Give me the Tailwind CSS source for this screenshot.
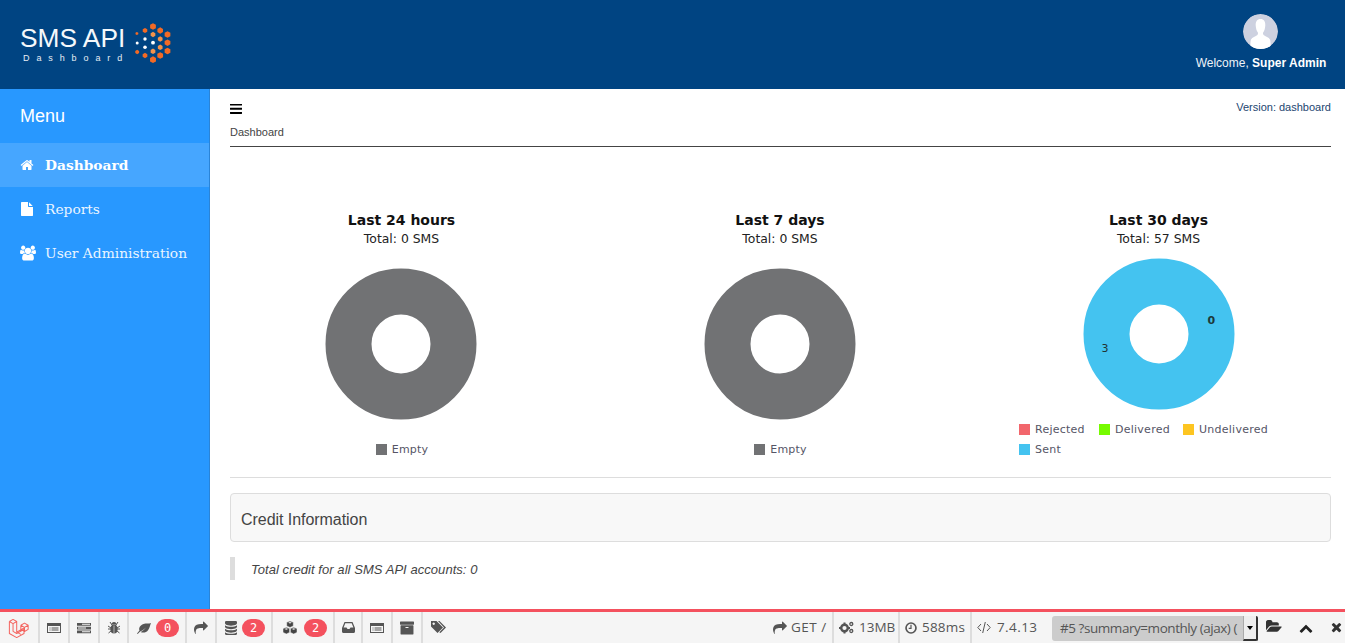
<!DOCTYPE html>
<html lang="en">

<head>
    <meta charset="UTF-8">
    <meta name="viewport" content="width=device-width, initial-scale=1.0">
    <title>SMS API Dashboard</title>
    <script src="https://cdn.jsdelivr.net/npm/@tailwindcss/browser@4"></script>
</head>

<body class="h-screen overflow-hidden flex flex-col bg-white font-['Liberation_Sans',sans-serif]">
    <!-- Header -->
    <header class="h-[89px] shrink-0 bg-[#004482] flex justify-between text-white">
        <div class="flex pl-[20px] pt-[23px]">
            <div>
                <div class="text-[26.300px] leading-[30px] text-[#f4f8fb]">SMS API</div>
                <div class="text-[9px] leading-[10px] mt-[0px] ml-[3px] tracking-[6.900px] text-[#e6edf4]">Dashboard</div>
            </div>
            <svg class="ml-[5px] -mt-[1px]" width="40" height="42" viewBox="136 23 37 42">
                <defs>
                    <polygon id="hex" points="0,-1 0.87,-0.5 0.87,0.5 0,1 -0.87,0.5 -0.87,-0.5" />
                </defs>
                <g fill="#f26a25">
                    <use href="#hex" transform="translate(153.5 27.5) scale(3.3)" />
                    <use href="#hex" transform="translate(145.5 31.5) scale(2.6)" />
                    <use href="#hex" transform="translate(160.7 31.5) scale(3.2)" />
                    <use href="#hex" transform="translate(168 35.5) scale(3.3)" />
                    <use href="#hex" transform="translate(137.4 34.5) scale(1.6)" />
                    <use href="#hex" transform="translate(168 43.7) scale(3.3)" />
                    <use href="#hex" transform="translate(168 52) scale(3.3)" />
                    <use href="#hex" transform="translate(137.7 53) scale(2.2)" />
                    <use href="#hex" transform="translate(145.5 56.5) scale(2.7)" />
                    <use href="#hex" transform="translate(160.7 56.5) scale(3.3)" />
                    <use href="#hex" transform="translate(153.5 60.7) scale(3.4)" />
                </g>
                <g fill="#f4924a">
                    <use href="#hex" transform="translate(153.5 35.5) scale(2.7)" />
                    <use href="#hex" transform="translate(160.7 40) scale(2.7)" />
                    <use href="#hex" transform="translate(160.7 48.3) scale(2.7)" />
                    <use href="#hex" transform="translate(153.5 52.3) scale(2.7)" />
                </g>
                <g fill="#ffffff">
                    <circle cx="145.5" cy="40" r="1.7" />
                    <circle cx="137.7" cy="44" r="1.5" />
                    <circle cx="153.5" cy="43.7" r="1.9" />
                    <circle cx="145.5" cy="48.3" r="1.8" />
                </g>
            </svg>
        </div>
        <div class="w-[150px] mr-[9px] flex flex-col items-center pt-[14px]">
            <svg width="35" height="35" viewBox="0 0 35 35" class="rounded-full -ml-[1px]">
                <circle cx="17.5" cy="17.5" r="17.5" fill="#cdd1e0" />
                <path d="M17.500 5c-3.400 0-5 2.600-4.800 6.500.2 3 .9 5.300 2 6.700.5.700.4 2-.3 2.700-1.700 1.500-5.300 2.300-6.400 4.600-.5 1.200-.7 5-.7 9.500h20.400c0-4.500-.2-8.300-.7-9.500-1.100-2.300-4.700-3.100-6.400-4.600-.7-.7-.8-2-.3-2.700 1.100-1.400 1.800-3.700 2-6.700.2-3.900-1.400-6.500-4.800-6.500z" fill="#ffffff" />
            </svg>
            <div class="mt-[7px] text-[12px] leading-[14px] whitespace-nowrap text-[#eef3f8]">Welcome, <b class="font-bold text-white">Super Admin</b></div>
        </div>
    </header>

    <div class="flex-1 flex min-h-0">
        <!-- Sidebar -->
        <aside class="w-[210px] shrink-0 bg-[#2898ff] border-r border-[#2a84d8] text-white">
            <div class="h-[54px] pl-[20px] pt-[1px] flex items-center text-[18px]">Menu</div>
            <nav class="font-['DejaVu_Serif',serif] text-[13.800px]">
                <a class="h-[44px] pl-[20px] flex items-center bg-[#46a6ff] font-bold">
                    <svg class="w-[14px] h-[14px] mr-[11px] fill-white" viewBox="0 0 1792 1792"><path d="M1472 992v480q0 26-19 45t-45 19h-384v-384h-256v384h-384q-26 0-45-19t-19-45v-480q0-1 .5-3t.5-3l575-474 575 474q1 2 1 6zm223-69l-62 74q-8 9-21 11h-3q-13 0-21-7l-692-577-692 577q-12 8-24 7-13-2-21-11l-62-74q-8-10-7-23.5t11-21.5l719-599q32-26 76-26t76 26l244 204v-195q0-14 9-23t23-9h192q14 0 23 9t9 23v408l219 182q10 8 11 21.5t-7 23.5z" /></svg>
                    Dashboard
                </a>
                <a class="h-[44px] pl-[20px] flex items-center text-[#eaf5ff]">
                    <svg class="w-[14px] h-[14px] mr-[11px] fill-white" viewBox="128 0 1536 1792"><path d="M1596 476q14 14 28 36h-472v-472q22 14 36 28zm-476 164h544v1056q0 40-28 68t-68 28h-1344q-40 0-68-28t-28-68v-1600q0-40 28-68t68-28h800v544q0 40 28 68t68 28z" /></svg>
                    Reports
                </a>
                <a class="h-[44px] pl-[20px] flex items-center text-[#eaf5ff]">
                    <svg class="w-[16px] h-[16px] mr-[9px] fill-white" viewBox="0 0 1920 1792"><path d="M593 896q-162 5-265 128h-134q-82 0-138-40.500t-56-118.500q0-353 124-353 6 0 43.500 21t97.500 42.500 119 21.500q67 0 133-23-5 37-5 66 0 139 81 256zm1071 637q0 120-73 189.500t-194 69.500h-874q-121 0-194-69.500t-73-189.500q0-53 3.500-103.500t14-109 26.500-108.500 43-97.500 62-81 85.500-53.500 111.500-20q10 0 43 21.500t73 48 107 48 135 21.500 135-21.500 107-48 73-48 43-21.500q61 0 111.500 20t85.500 53.500 62 81 43 97.500 26.500 108.500 14 109 3.500 103.500zm-1024-1277q0 106-75 181t-181 75-181-75-75-181 75-181 181-75 181 75 75 181zm704 384q0 159-112.500 271.500t-271.500 112.500-271.500-112.500-112.500-271.500 112.500-271.500 271.500-112.500 271.500 112.500 112.500 271.500zm576 225q0 78-56 118.500t-138 40.500h-134q-103-123-265-128 81-117 81-256 0-29-5-66 66 23 133 23 59 0 119-21.500t97.500-42.500 43.500-21q124 0 124 353zm-128-609q0 106-75 181t-181 75-181-75-75-181 75-181 181-75 181 75 75 181z" /></svg>
                    User Administration
                </a>
            </nav>
        </aside>

        <!-- Main -->
        <main class="flex-1 min-w-0 pl-[20px] pr-[14px]">
            <div class="flex justify-between pt-[11px] h-[58px] border-b border-[#444444]">
                <div>
                    <svg class="w-[12px] h-[10px] mt-[4px] fill-black" viewBox="128 320 1536 1216" preserveAspectRatio="none"><path d="M1664 1344v128q0 26-19 45t-45 19h-1408q-26 0-45-19t-19-45v-128q0-26 19-45t45-19h1408q26 0 45 19t19 45zm0-512v128q0 26-19 45t-45 19h-1408q-26 0-45-19t-19-45v-128q0-26 19-45t45-19h1408q26 0 45 19t19 45zm0-512v128q0 26-19 45t-45 19h-1408q-26 0-45-19t-19-45v-128q0-26 19-45t45-19h1408q26 0 45 19t19 45z" /></svg>
                    <div class="mt-[11px] text-[11px] leading-[14px] text-[#444444]">Dashboard</div>
                </div>
                <div class="text-[11px] leading-[14px] text-[#23456f]">Version: dashboard</div>
            </div>

            <!-- Charts -->
            <div class="-ml-[18px] -mr-[16px] mt-[64px] grid grid-cols-[379px_378px_379px] h-[248px] font-['DejaVu_Sans',sans-serif]">
                <section class="flex flex-col items-center">
                    <h3 class="text-[14px] leading-[18px] font-bold text-[#111111]">Last 24 hours</h3>
                    <p class="text-[12.400px] leading-[20px] text-[#222222]">Total: 0 SMS</p>
                    <div class="flex-1 flex items-center justify-center mr-[1px]">
                        <svg width="152" height="152" viewBox="0 0 152 152"><circle cx="76" cy="76" r="52.500" fill="none" stroke="#717274" stroke-width="46" /></svg>
                    </div>
                    <div class="h-[20px] ml-[1px] flex items-center gap-[5px] text-[11px] text-[#555566] tracking-[0.2px]">
                        <span class="w-[11px] h-[11px] bg-[#717274]"></span><span class="mt-[2px]">Empty</span>
                    </div>
                </section>
                <section class="flex flex-col items-center">
                    <h3 class="text-[14px] leading-[18px] font-bold text-[#111111]">Last 7 days</h3>
                    <p class="text-[12.400px] leading-[20px] text-[#222222]">Total: 0 SMS</p>
                    <div class="flex-1 flex items-center justify-center">
                        <svg width="152" height="152" viewBox="0 0 152 152"><circle cx="76" cy="76" r="52.500" fill="none" stroke="#717274" stroke-width="46" /></svg>
                    </div>
                    <div class="h-[20px] ml-[1px] flex items-center gap-[5px] text-[11px] text-[#555566] tracking-[0.2px]">
                        <span class="w-[11px] h-[11px] bg-[#717274]"></span><span class="mt-[2px]">Empty</span>
                    </div>
                </section>
                <section class="flex flex-col items-center">
                    <h3 class="text-[14px] leading-[18px] font-bold text-[#111111]">Last 30 days</h3>
                    <p class="text-[12.400px] leading-[20px] text-[#222222]">Total: 57 SMS</p>
                    <div class="flex-1 flex items-center justify-center">
                        <div class="relative w-[152px] h-[152px]">
                            <svg width="152" height="152" viewBox="0 0 152 152"><circle cx="76" cy="76" r="52.500" fill="none" stroke="#44c3f0" stroke-width="46" /></svg>
                            <span class="absolute left-[125px] top-[56px] text-[11px] leading-[14px] font-bold text-[#1d3a3a]">0</span>
                            <span class="absolute left-[19px] top-[84px] text-[11px] leading-[14px] text-[#223333]">3</span>
                        </div>
                    </div>
                    <div class="self-start ml-[50px] w-[260px] flex flex-wrap text-[11px] text-[#555566] tracking-[0.25px]">
                        <div class="h-[20px] w-[80px] flex items-center gap-[5px]"><span class="w-[11px] h-[11px] bg-[#f2666c]"></span><span class="mt-[2px]">Rejected</span></div>
                        <div class="h-[20px] w-[84px] flex items-center gap-[5px]"><span class="w-[11px] h-[11px] bg-[#76fb00]"></span><span class="mt-[2px]">Delivered</span></div>
                        <div class="h-[20px] w-[90px] flex items-center gap-[5px]"><span class="w-[11px] h-[11px] bg-[#fdc521]"></span><span class="mt-[2px]">Undelivered</span></div>
                        <div class="h-[20px] w-[80px] flex items-center gap-[5px]"><span class="w-[11px] h-[11px] bg-[#44c3f0]"></span><span class="mt-[2px]">Sent</span></div>
                    </div>
                </section>
            </div>

            <hr class="mt-[18px] border-[#dddddd]">

            <!-- Credit -->
            <div class="mt-[15px] h-[49px] pl-[10px] pt-[5px] flex items-center bg-[#f8f8f8] border border-[#dddddd] rounded-[4px] text-[16px] tracking-[-0.05px] text-[#444444]">Credit Information</div>
            <div class="mt-[15px] h-[23px] border-l-[5px] border-[#dddddd] pl-[16px] pt-[3px] flex items-center text-[13px] tracking-[0.05px] italic text-[#444444]">Total credit for all SMS API accounts: 0</div>
        </main>
    </div>

    <!-- Debug bar -->
    <footer class="h-[34px] shrink-0 bg-[#f5f5f5] border-t-[3px] border-[#f4515e] flex justify-between font-['Open_Sans',sans-serif] text-[13.500px] text-[#555555]">
        <div class="flex">
            <div class="w-[40px] flex items-center justify-center border-r-2 border-[#dddddd]">
                <svg width="22" height="23" viewBox="0 0 24 24" fill="none" stroke="#f4645f" stroke-width="1.100" stroke-linejoin="round"><path d="M1.500 5.500 5.500 3.200 9.500 5.500V17l4.500 2.500M1.500 5.500V18.500L9.500 23l8-4.500v-4.500l-8 4.500-4-2.300V7.800L1.500 5.500M5.500 7.800l4-2.300M14 9.500l4-2.300 4 2.300v4.500l-4 2.300-4-2.300V9.500M18 11.800v4.500M14 9.500l4 2.300 4-2.300M9.500 17l8-4.500" /></svg>
            </div>
            <div class="w-[30px] flex items-center justify-center border-r-2 border-[#dddddd]">
                <svg width="14" height="12" viewBox="0 0 14 12" fill="#555555"><path fill-rule="evenodd" d="M0 1h14v10H0zM1 4v6h12V4zM2.500 5.500h1v1h-1zM4.500 5.500h7v1h-7zM2.500 7.500h1v1h-1zM4.500 7.500h7v1h-7z" /></svg>
            </div>
            <div class="w-[30px] flex items-center justify-center border-r-2 border-[#dddddd]">
                <svg width="14" height="12" viewBox="0 0 14 12" fill="#555555"><path d="M0 1h14v2.800H0zM0 4.700h14v2.800H0zM0 8.400h14v2.800H0z" /><path d="M5 1.800h8v1H5zM1 5.600h8v1H1zM5 9.300h8v1H5z" fill="#f5f5f5" /></svg>
            </div>
            <div class="w-[29px] flex items-center justify-center border-r-2 border-[#dddddd]">
                <svg width="12" height="13" viewBox="0 0 12 13" fill="#555555"><ellipse cx="6" cy="8" rx="3.600" ry="4.500" /><path d="M3.500 3.500a2.500 2.500 0 0 1 5 0z" /><path d="M2 1l2 3M10 1 8 4M0 5l3 2M12 5 9 7M0 8h3M12 8H9M.5 12 3 10M11.500 12 9 10" stroke="#555555" stroke-width="1" fill="none" /><path d="M5.700 4.500h.6v8h-.6z" fill="#f5f5f5" /></svg>
            </div>
            <div class="w-[58px] pl-[8px] flex items-center border-r-2 border-[#dddddd]">
                <svg width="14" height="12" viewBox="0 0 14 12" fill="#555555"><path d="M14 1C12 2 9 1 6.500 2 3 3.200 1.500 6 2.500 8.500 1.500 9.500 1 10.500 0 11.500l.7.500C1.700 11 2.500 10 3.500 9.300 6 8.500 7.500 6.500 9 5.500 7 7.500 5.500 9 3.700 10c2.300 1.300 5.800.5 7.500-2C12.800 5.800 13 3.500 14 1z" /></svg>
                <span class="ml-[5px] w-[23px] h-[18px] rounded-full bg-[#f4515e] text-white text-[12px] leading-[18px] text-center font-['DejaVu_Sans_Mono',monospace]">0</span>
            </div>
            <div class="w-[30px] flex items-center justify-center border-r-2 border-[#dddddd]">
                <svg class="w-[14px] h-[14px] fill-[#555555]" viewBox="0 0 1792 1792"><path d="M1792 640q0 26-19 45l-512 512q-19 19-45 19t-45-19-19-45v-256h-224q-98 0-175.500 6t-154 21.500-133 42.500-105.500 69.500-80 101-48.500 138.500-17.500 181q0 55 5 123 0 6 2.500 23.500t2.500 26.500q0 15-8.500 25t-23.500 10q-16 0-28-17-7-9-13-22t-13.500-30-10.500-24q-127-285-127-451 0-199 53-333 162-403 875-403h224v-256q0-26 19-45t45-19 45 19l512 512q19 19 19 45z" /></svg>
            </div>
            <div class="w-[56px] pl-[8px] flex items-center border-r-2 border-[#dddddd]">
                <svg class="w-[12px] h-[14px] fill-[#555555]" viewBox="128 128 1536 1536" preserveAspectRatio="none"><path d="M896 768q237 0 443-43t325-127v170q0 69-103 128t-280 93.500-385 34.500-385-34.500-280-93.500-103-128v-170q119 84 325 127t443 43zm0 768q237 0 443-43t325-127v170q0 69-103 128t-280 93.500-385 34.500-385-34.500-280-93.500-103-128v-170q119 84 325 127t443 43zm0-384q237 0 443-43t325-127v170q0 69-103 128t-280 93.500-385 34.500-385-34.500-280-93.500-103-128v-170q119 84 325 127t443 43zm0-1152q208 0 385 34.500t280 93.500 103 128v128q0 69-103 128t-280 93.500-385 34.500-385-34.500-280-93.500-103-128v-128q0-69 103-128t280-93.500 385-34.500z" /></svg>
                <span class="ml-[5px] w-[23px] h-[18px] rounded-full bg-[#f4515e] text-white text-[12px] leading-[18px] text-center font-['DejaVu_Sans_Mono',monospace]">2</span>
            </div>
            <div class="w-[62px] pl-[9px] flex items-center border-r-2 border-[#dddddd]">
                <svg width="16" height="13" viewBox="0 0 16 13" fill="#444444" stroke="#f5f5f5" stroke-width=".5"><path d="M8 0 11.300 1.300V5L8 6.500 4.700 5V1.300z" /><path d="M4.300 6.300 7.600 7.600v3.800L4.300 13 1 11.400V7.600z" /><path d="M11.700 6.300 15 7.600v3.800L11.700 13 8.400 11.400V7.600z" /><path d="M8 1 9.800 1.700 8 2.500 6.200 1.700zM4.300 7.300 6.100 8 4.300 8.800 2.500 8zM11.700 7.300 13.500 8 11.700 8.800 9.900 8z" fill="#f5f5f5" stroke="none" /></svg>
                <span class="ml-[6px] w-[23px] h-[18px] rounded-full bg-[#f4515e] text-white text-[12px] leading-[18px] text-center font-['DejaVu_Sans_Mono',monospace]">2</span>
            </div>
            <div class="w-[28px] flex items-center justify-center border-r-2 border-[#dddddd]">
                <svg width="13" height="11" viewBox="0 0 13 11" fill="#555555"><path fill-rule="evenodd" d="M2.500 0h8L13 6v3.500c0 .8-.6 1.500-1.500 1.500h-10C.6 11 0 10.300 0 9.500V6zM3.300 1.300 1.600 5.500h2.900l1 1.500h2l1-1.500h2.900L9.700 1.300z" /></svg>
            </div>
            <div class="w-[30px] flex items-center justify-center border-r-2 border-[#dddddd]">
                <svg width="14" height="12" viewBox="0 0 14 12" fill="#555555"><path fill-rule="evenodd" d="M0 1h14v10H0zM1 4v6h12V4zM2.500 5.500h1v1h-1zM4.500 5.500h7v1h-7zM2.500 7.500h1v1h-1zM4.500 7.500h7v1h-7z" /></svg>
            </div>
            <div class="w-[30px] flex items-center justify-center border-r-2 border-[#dddddd]">
                <svg class="w-[14px] h-[14px] fill-[#555555]" viewBox="64 64 1664 1664"><path d="M1088 832q0-26-19-45t-45-19h-256q-26 0-45 19t-19 45 19 45 45 19h256q26 0 45-19t19-45zm576-192v960q0 26-19 45t-45 19h-1408q-26 0-45-19t-19-45v-960q0-26 19-45t45-19h1408q26 0 45 19t19 45zm64-448v256q0 26-19 45t-45 19h-1536q-26 0-45-19t-19-45v-256q0-26 19-45t45-19h1536q26 0 45 19t19 45z" /></svg>
            </div>
            <div class="w-[30px] flex items-center justify-center">
                <svg width="15" height="13" viewBox="0 0 15 13" fill="#555555"><path fill-rule="evenodd" d="M0 0h5.500L12 6.500 6.500 12 0 5.500zM2.700 1.500a1.200 1.200 0 1 0 .01 0z" /><path d="M7 0h1.500L15 6.500 9.500 12l-1.200-.8L13 6.500z" /></svg>
            </div>
        </div>

        <div class="flex items-center">
            <div class="h-full w-[65px] pl-[4px] flex items-center border-r-2 border-[#dddddd] whitespace-nowrap">
                <svg class="w-[14px] h-[14px] fill-[#555555] mr-[4px]" viewBox="0 0 1792 1792"><path d="M1792 640q0 26-19 45l-512 512q-19 19-45 19t-45-19-19-45v-256h-224q-98 0-175.500 6t-154 21.500-133 42.500-105.500 69.500-80 101-48.500 138.500-17.500 181q0 55 5 123 0 6 2.500 23.500t2.500 26.500q0 15-8.500 25t-23.500 10q-16 0-28-17-7-9-13-22t-13.500-30-10.500-24q-127-285-127-451 0-199 53-333 162-403 875-403h224v-256q0-26 19-45t45-19 45 19l512 512q19 19 19 45z" /></svg>
                <span class="tracking-[0.5px]">GET /</span>
            </div>
            <div class="h-full w-[66px] pl-[5px] flex items-center border-r-2 border-[#dddddd]">
                <svg width="15" height="13" viewBox="0 0 15 13" fill="#555555"><circle cx="5.500" cy="7" r="3.300" fill="none" stroke="#555555" stroke-width="2.400" /><path d="M4.500 1.500h2v2h-2zM4.500 10.500h2v2h-2zM0 6h2v2H0zM9 6h2v2H9z" /><circle cx="12.300" cy="3" r="1.500" fill="none" stroke="#555555" stroke-width="1.300" /><circle cx="12.300" cy="10" r="1.500" fill="none" stroke="#555555" stroke-width="1.300" /></svg>
                <span class="ml-[5px]">13MB</span>
            </div>
            <div class="h-full w-[72px] pl-[5px] flex items-center border-r-2 border-[#dddddd]">
                <svg width="12" height="12" viewBox="0 0 13 13" fill="none" stroke="#555555"><circle cx="6.500" cy="6.500" r="5.400" stroke-width="1.800" /><path d="M6.500 3v4H4" stroke-width="1.300" /></svg>
                <span class="ml-[5px] tracking-[0.2px]">588ms</span>
            </div>
            <div class="h-full w-[80px] pl-[5px] flex items-center">
                <svg width="14" height="11" viewBox="0 0 14 11" fill="none" stroke="#555555" stroke-width="1"><path d="M4 2 .8 5.500 4 9M10 2l3.200 3.500L10 9M8.300 0 5.700 11" /></svg>
                <span class="ml-[6px] tracking-[0.4px]">7.4.13</span>
            </div>
            <div class="w-[206px] h-[25px] mt-[2px] flex rounded-[3px] bg-[#cccccc] text-[13.500px] leading-[25px] text-[#555555]">
                <span class="w-[191px] pl-[8px] overflow-hidden whitespace-nowrap tracking-[-0.45px]">#5 ?summary=monthly (ajax) (</span>
                <span class="w-[15px] flex items-center justify-center bg-[#eeeeee] border-r-2 border-b-2 border-[#333333] border-l border-l-[#aaaaaa] rounded-r-[2px]">
                    <span class="w-0 h-0 border-x-[3px] border-x-transparent border-t-[4px] border-t-black"></span>
                </span>
            </div>
            <div class="w-[32px] flex justify-center">
                <svg class="w-[16px] h-[15px] fill-[#333333] -mt-[3px]" viewBox="0 0 1920 1792"><path d="M1879 952q0 31-31 66l-336 396q-43 51-120.500 86.500t-143.500 35.500h-1088q-34 0-60.500-13t-26.500-43q0-31 31-66l336-396q43-51 120.500-86.500t143.500-35.500h1088q34 0 60.500 13t26.500 43zm-343-344v160h-832q-94 0-197 47.500t-164 119.500l-337 396-5 6q0-4-.5-12.500t-.5-12.500v-960q0-92 66-158t158-66h320q92 0 158 66t66 158v32h544q92 0 158 66t66 158z" /></svg>
            </div>
            <div class="w-[31px] flex justify-center">
                <svg class="w-[14px] h-[14px] fill-[#222222]" viewBox="0 0 1792 1792"><path d="M1683 1331l-166 165q-19 19-45 19t-45-19l-531-531-531 531q-19 19-45 19t-45-19l-166-165q-19-19-19-45.500t19-45.500l742-741q19-19 45-19t45 19l742 741q19 19 19 45.500t-19 45.500z" /></svg>
            </div>
            <div class="w-[24px] flex justify-end pr-[3px]">
                <svg class="w-[11px] h-[11px] fill-[#333333] -mt-[1px]" viewBox="200 300 1400 1300"><path d="M1490 1322q0 40-28 68l-136 136q-28 28-68 28t-68-28l-294-294-294 294q-28 28-68 28t-68-28l-136-136q-28-28-28-68t28-68l294-294-294-294q-28-28-28-68t28-68l136-136q28-28 68-28t68 28l294 294 294-294q28-28 68-28t68 28l136 136q28 28 28 68t-28 68l-294 294 294 294q28 28 28 68z" /></svg>
            </div>
        </div>
    </footer>
</body>

</html>
